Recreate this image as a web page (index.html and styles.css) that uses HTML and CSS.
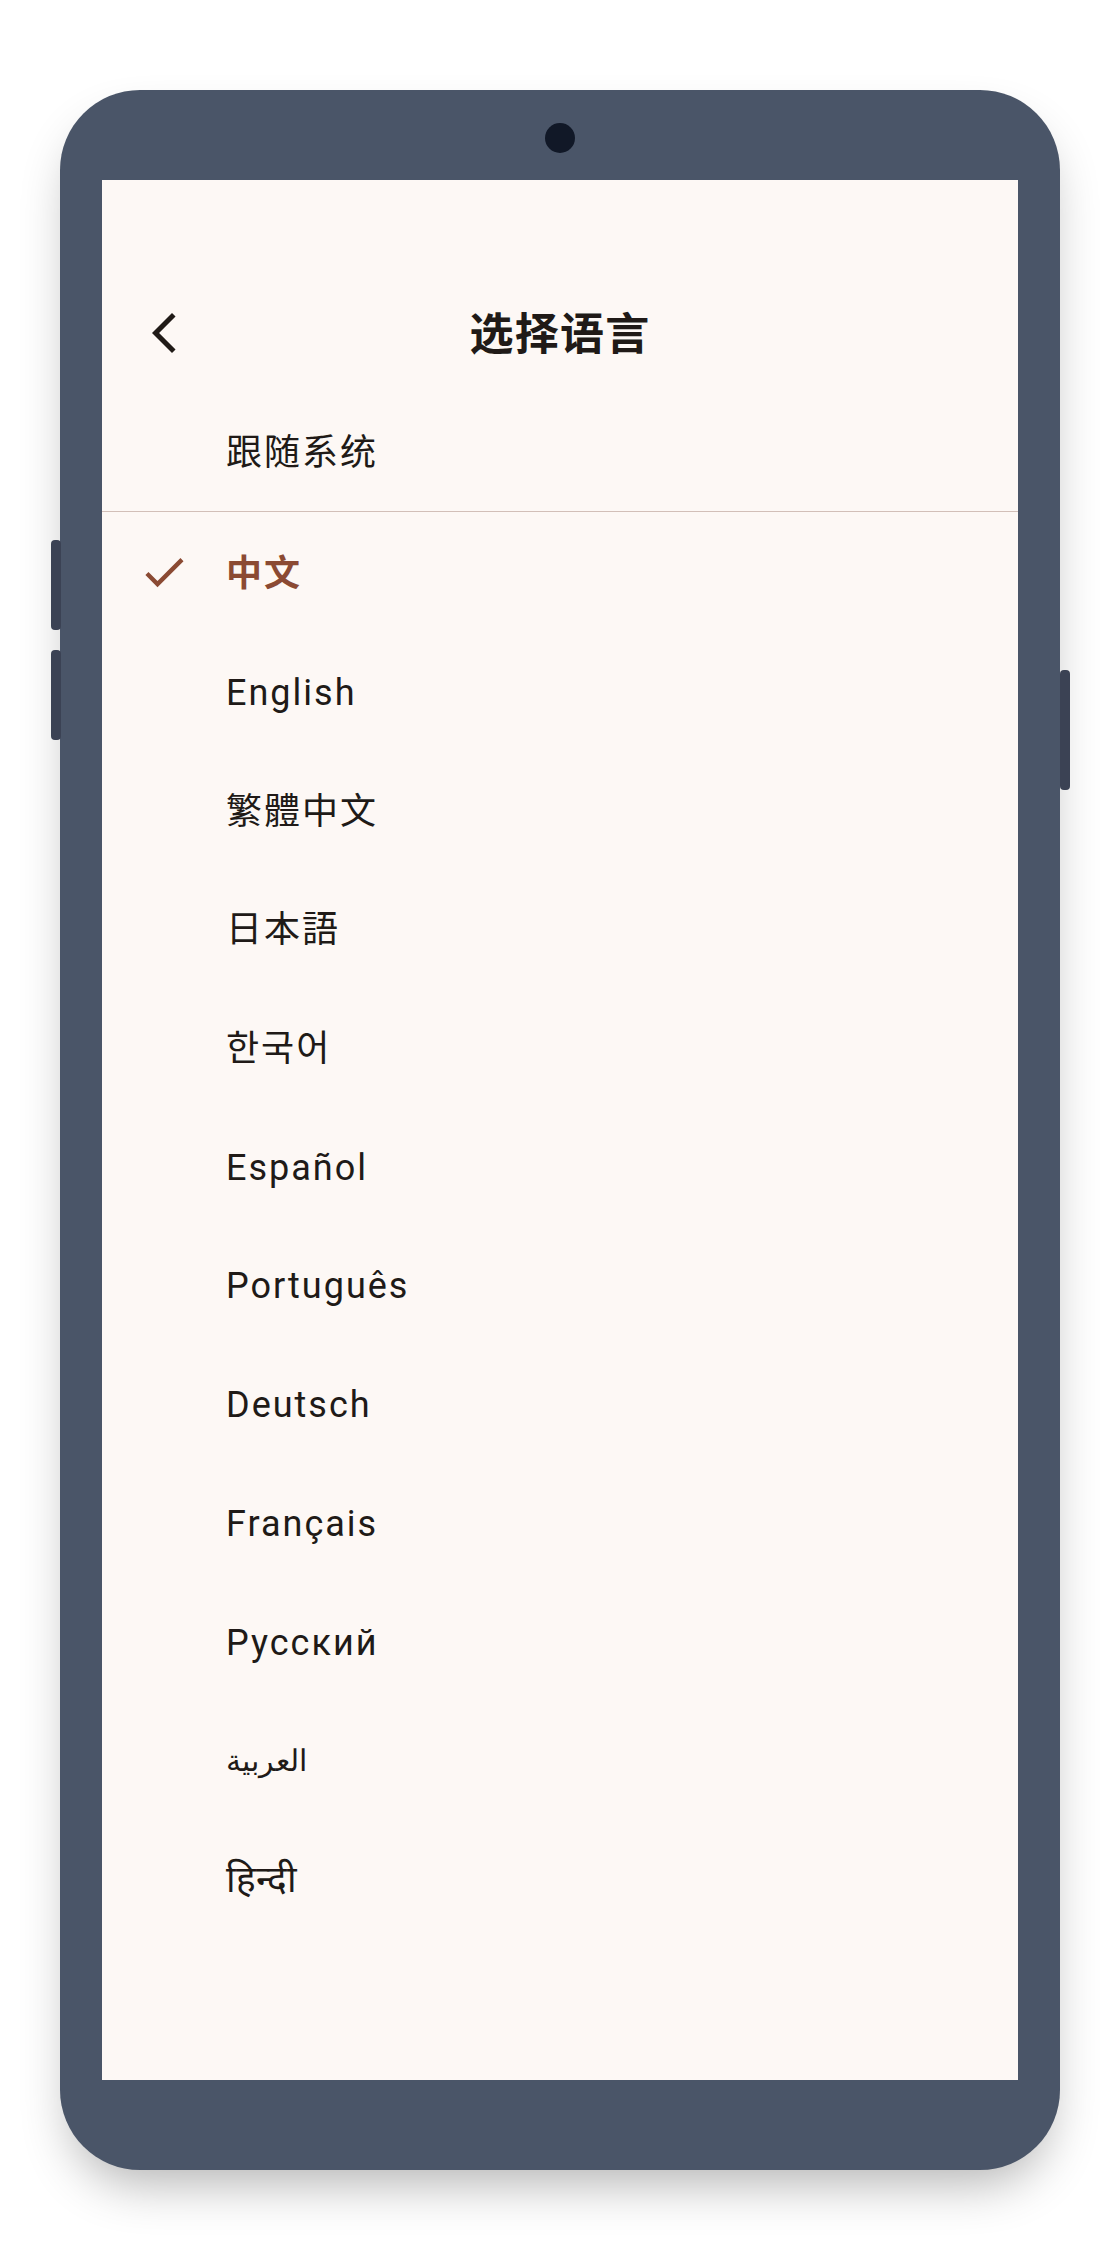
FILE: index.html
```html
<!DOCTYPE html>
<html lang="zh-CN">
<head>
<meta charset="utf-8">
<title>选择语言</title>
<link rel="stylesheet" href="styles.css">
</head>
<body>
<div class="stage">
  <div class="phone">
    <span class="side-btn side-l1"></span>
    <span class="side-btn side-l2"></span>
    <span class="side-btn side-r"></span>
    <span class="camera"></span>
    <div class="screen">
      <header class="appbar">
        <button class="back" aria-label="返回">
          <svg viewBox="0 0 24 24"><path d="M17.77 3.77 16 2 6 12l10 10 1.77-1.77L9.54 12z"/></svg>
        </button>
        <h1 class="title">选择语言</h1>
        <span></span>
      </header>
      <div class="row follow"><span class="lead"></span><span class="label">跟随系统</span></div>
      <div class="divider"></div>
      <ul class="list">
        <li class="row selected"><span class="lead"><svg class="check" viewBox="0 0 24 24"><path d="M9 16.17 4.83 12l-1.42 1.41L9 19 21 7l-1.41-1.41z"/></svg></span><span class="label">中文</span></li>
        <li class="row"><span class="lead"></span><span class="label" lang="en">English</span></li>
        <li class="row"><span class="lead"></span><span class="label" lang="zh-TW">繁體中文</span></li>
        <li class="row"><span class="lead"></span><span class="label" lang="ja">日本語</span></li>
        <li class="row"><span class="lead"></span><span class="label" lang="ko">한국어</span></li>
        <li class="row"><span class="lead"></span><span class="label" lang="es">Español</span></li>
        <li class="row"><span class="lead"></span><span class="label" lang="pt">Português</span></li>
        <li class="row"><span class="lead"></span><span class="label" lang="de">Deutsch</span></li>
        <li class="row"><span class="lead"></span><span class="label" lang="fr">Français</span></li>
        <li class="row"><span class="lead"></span><span class="label" lang="ru">Русский</span></li>
        <li class="row"><span class="lead"></span><span class="label arabic" lang="ar">العربية</span></li>
        <li class="row"><span class="lead"></span><span class="label hindi" lang="hi">हिन्दी</span></li>
      </ul>
    </div>
  </div>
</div>
</body>
</html>
```
FILE: styles.css
```css
html, body {
  margin: 0;
  padding: 0;
  background: #ffffff;
}

.stage {
  display: flex;
  justify-content: center;
  padding-top: 90px;
  height: 2260px;
  box-sizing: border-box;
}

.phone {
  position: relative;
  width: 1000px;
  height: 2080px;
  box-sizing: border-box;
  padding: 90px 42px;
  background: #4a5568;
  border-radius: 80px;
  box-shadow: 0 25px 50px -12px rgba(0, 0, 0, 0.3);
}

.side-btn {
  position: absolute;
  width: 10px;
  background: #3b4254;
  border-radius: 4px;
}
.side-l1 { left: -9px; top: 450px; height: 90px; }
.side-l2 { left: -9px; top: 560px; height: 90px; }
.side-r  { right: -10px; top: 580px; height: 120px; }

.camera {
  position: absolute;
  left: 485px;
  top: 33px;
  width: 30px;
  height: 30px;
  border-radius: 50%;
  background: #111827;
}

.screen {
  height: 1900px;
  background: #fdf8f5;
  padding-top: 91px;
  box-sizing: border-box;
  overflow: hidden;
  font-family: Roboto, "Noto Sans CJK SC", sans-serif;
  color: #201a17;
}

.appbar {
  height: 120px;
  display: grid;
  grid-template-columns: 1fr auto 1fr;
  align-items: center;
}

.back {
  justify-self: start;
  margin: 4px 0 0 38px;
  padding: 0;
  width: 48px;
  height: 48px;
  border: 0;
  background: none;
  display: flex;
}
.back svg {
  width: 48px;
  height: 48px;
  fill: #201a17;
}

.title {
  margin: 0;
  font-size: 44px;
  font-weight: 700;
  letter-spacing: 1.3px;
  line-height: 1;
  font-family: "Noto Sans CJK SC", sans-serif;
}

.row {
  display: flex;
  align-items: center;
  height: 118.7px;
}
.follow {
  height: 120px;
}

.lead {
  width: 124px;
  flex: none;
  box-sizing: border-box;
  padding-left: 36px;
  display: flex;
  align-items: center;
}

.check {
  width: 52px;
  height: 52px;
  fill: #8b4a33;
}

.label {
  font-size: 36px;
  letter-spacing: 2px;
  line-height: 1;
  padding-top: 4px;
  white-space: nowrap;
}

.label:lang(zh-TW) { font-family: Roboto, "Noto Sans CJK TC", sans-serif; }
.label:lang(ja) { font-family: Roboto, "Noto Sans CJK JP", sans-serif; }
.label:lang(ko) { font-family: Roboto, "Noto Sans CJK KR", sans-serif; }

.selected .label {
  color: #8b4a33;
  font-weight: 700;
}

.arabic {
  letter-spacing: 0;
  font-size: 30px;
}
.hindi {
  letter-spacing: 0;
  font-size: 37px;
}

.divider {
  height: 1px;
  background: #d2bfb8;
}

.list {
  list-style: none;
  margin: 0;
  padding: 1px 0 0;
}
```
